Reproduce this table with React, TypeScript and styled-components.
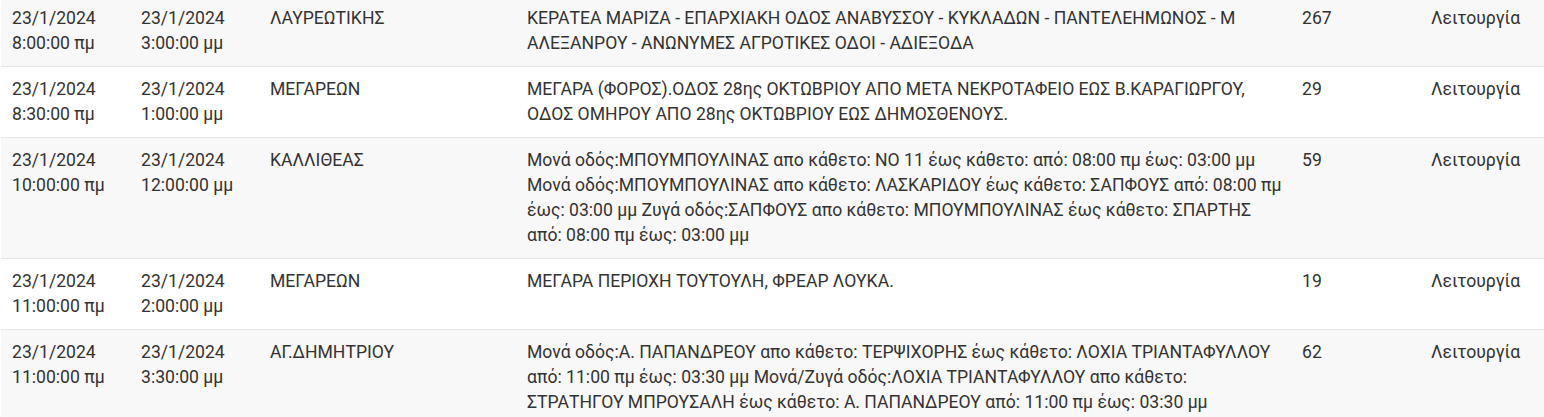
import React from "react";
import styled, { createGlobalStyle } from "styled-components";

const Global = createGlobalStyle`
  html, body { margin: 0; padding: 0; background: #fff; }
  body { font-family: Roboto, "Noto Sans", "DejaVu Sans", sans-serif; overflow: hidden; }
`;

const Table = styled.div`
  margin-top: -4px;
  padding-left: 1px;
  background: #fff;
  width: 1544px;
  box-sizing: border-box;
`;

const Row = styled.div<{ $striped: boolean }>`
  display: grid;
  grid-template-columns: 129px 129px 257px 775px 129px 1fr;
  background: ${(p) => (p.$striped ? "#f8f8f8" : "#fff")};
  border-bottom: 1px solid #e6e6e6;
`;

const Cell = styled.div`
  padding: 10px 5px 10px 11px;
  font-size: 17.6px;
  line-height: 25px;
  color: #333;
`;

const DateCell = styled(Cell)`
  white-space: nowrap;
`;

type Item = {
  start: [string, string];
  end: [string, string];
  area: string;
  desc: string;
  count: string;
  status: string;
};

const items: Item[] = [
  {
    start: ["23/1/2024", "8:00:00 πμ"],
    end: ["23/1/2024", "3:00:00 μμ"],
    area: "ΛΑΥΡΕΩΤΙΚΗΣ",
    desc: "ΚΕΡΑΤΕΑ ΜΑΡΙΖΑ - ΕΠΑΡΧΙΑΚΗ ΟΔΟΣ ΑΝΑΒΥΣΣΟΥ - ΚΥΚΛΑΔΩΝ - ΠΑΝΤΕΛΕΗΜΩΝΟΣ - Μ ΑΛΕΞΑΝΡΟΥ - ΑΝΩΝΥΜΕΣ ΑΓΡΟΤΙΚΕΣ ΟΔΟΙ - ΑΔΙΕΞΟΔΑ",
    count: "267",
    status: "Λειτουργία",
  },
  {
    start: ["23/1/2024", "8:30:00 πμ"],
    end: ["23/1/2024", "1:00:00 μμ"],
    area: "ΜΕΓΑΡΕΩΝ",
    desc: "ΜΕΓΑΡΑ (ΦΟΡΟΣ).ΟΔΟΣ 28ης ΟΚΤΩΒΡΙΟΥ ΑΠΟ ΜΕΤΑ ΝΕΚΡΟΤΑΦΕΙΟ ΕΩΣ Β.ΚΑΡΑΓΙΩΡΓΟΥ, ΟΔΟΣ ΟΜΗΡΟΥ ΑΠΟ 28ης ΟΚΤΩΒΡΙΟΥ ΕΩΣ ΔΗΜΟΣΘΕΝΟΥΣ.",
    count: "29",
    status: "Λειτουργία",
  },
  {
    start: ["23/1/2024", "10:00:00 πμ"],
    end: ["23/1/2024", "12:00:00 μμ"],
    area: "ΚΑΛΛΙΘΕΑΣ",
    desc: "Μονά οδός:ΜΠΟΥΜΠΟΥΛΙΝΑΣ απο κάθετο: ΝΟ 11 έως κάθετο: από: 08:00 πμ έως: 03:00 μμ Μονά οδός:ΜΠΟΥΜΠΟΥΛΙΝΑΣ απο κάθετο: ΛΑΣΚΑΡΙΔΟΥ έως κάθετο: ΣΑΠΦΟΥΣ από: 08:00 πμ έως: 03:00 μμ Ζυγά οδός:ΣΑΠΦΟΥΣ απο κάθετο: ΜΠΟΥΜΠΟΥΛΙΝΑΣ έως κάθετο: ΣΠΑΡΤΗΣ από: 08:00 πμ έως: 03:00 μμ",
    count: "59",
    status: "Λειτουργία",
  },
  {
    start: ["23/1/2024", "11:00:00 πμ"],
    end: ["23/1/2024", "2:00:00 μμ"],
    area: "ΜΕΓΑΡΕΩΝ",
    desc: "ΜΕΓΑΡΑ ΠΕΡΙΟΧΗ ΤΟΥΤΟΥΛΗ, ΦΡΕΑΡ ΛΟΥΚΑ.",
    count: "19",
    status: "Λειτουργία",
  },
  {
    start: ["23/1/2024", "11:00:00 πμ"],
    end: ["23/1/2024", "3:30:00 μμ"],
    area: "ΑΓ.ΔΗΜΗΤΡΙΟΥ",
    desc: "Μονά οδός:Α. ΠΑΠΑΝΔΡΕΟΥ απο κάθετο: ΤΕΡΨΙΧΟΡΗΣ έως κάθετο: ΛΟΧΙΑ ΤΡΙΑΝΤΑΦΥΛΛΟΥ από: 11:00 πμ έως: 03:30 μμ Μονά/Ζυγά οδός:ΛΟΧΙΑ ΤΡΙΑΝΤΑΦΥΛΛΟΥ απο κάθετο: ΣΤΡΑΤΗΓΟΥ ΜΠΡΟΥΣΑΛΗ έως κάθετο: Α. ΠΑΠΑΝΔΡΕΟΥ από: 11:00 πμ έως: 03:30 μμ",
    count: "62",
    status: "Λειτουργία",
  },
];

export default function App() {
  return (
    <>
      <Global />
      <Table>
        {items.map((it, i) => (
          <Row key={i} $striped={i % 2 === 0}>
            <DateCell>
              {it.start[0]}
              <br />
              {it.start[1]}
            </DateCell>
            <Cell>
              {it.end[0]}
              <br />
              {it.end[1]}
            </Cell>
            <Cell>{it.area}</Cell>
            <Cell>{it.desc}</Cell>
            <Cell>{it.count}</Cell>
            <Cell>{it.status}</Cell>
          </Row>
        ))}
      </Table>
    </>
  );
}
